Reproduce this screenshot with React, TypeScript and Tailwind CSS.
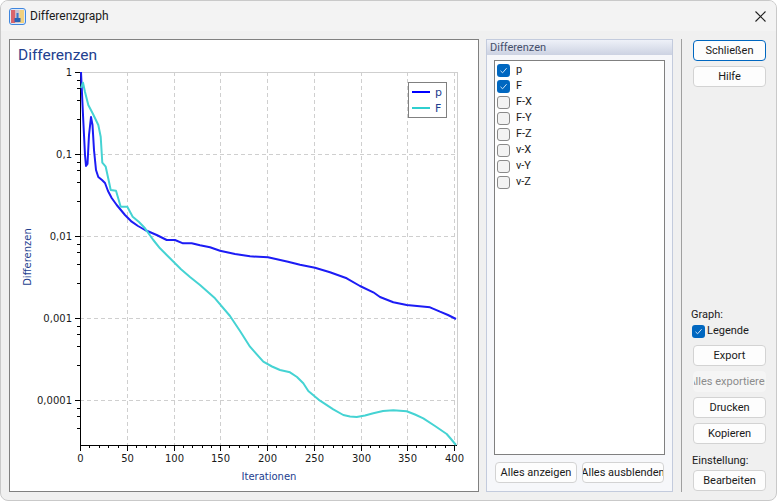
import { useState } from "react"

// curve points in page pixels, read off the plot
const pLine = "81,72 83,115 85,155 86,166 87.5,164 89,135 91,117 92.5,125 94,150 96,170 98.3,177 102,180 105,183 108,191 111.7,198 116.7,205 125,215 131.7,221.7 138,226 145,230 156.7,235 166.7,240 175,240 183,243.3 191.7,243.3 200,245.3 210,247.3 220,250.7 235,254 250,256.3 268,257.3 288,261.7 300,264.7 315,267.7 330,272.3 346.7,278.3 360,286 373.3,292.3 380,297 393.3,302.3 406.7,305 430,307.3 440,311.7 448,315 456,319"
const fLine = "81,88 83,82.7 85,92 88.3,105 93,114 98.3,125 100.7,136.7 102.3,162.7 105.7,166.7 109.3,183.3 110.7,190 116,190.7 120.7,206.7 127.3,206.7 132.7,216.7 139,222 145,228.3 153.3,240 160,248.3 166.7,255 181,269.3 190,277 200,285 215,298.3 230,316 240,331 250,346.7 263.3,361.7 272,366.5 280,370 290,372.3 297,377 303.3,383.3 308.3,391 320,400.7 333.3,409.3 343.3,415 350,416.5 356.7,417 365,415.5 373.3,413.3 383,411 393.3,410.3 406.7,411.3 415,414.5 423.3,418.3 435,426 446.7,434 451,439 456,445"

const xMajor = [
  { v: 0, x: 80 },
  { v: 50, x: 127 },
  { v: 100, x: 174 },
  { v: 150, x: 220 },
  { v: 200, x: 267 },
  { v: 250, x: 314 },
  { v: 300, x: 361 },
  { v: 350, x: 407 },
  { v: 400, x: 454 },
]
const yMajor = [
  { v: "1", y: 72 },
  { v: "0,1", y: 154 },
  { v: "0,01", y: 236 },
  { v: "0,001", y: 318 },
  { v: "0,0001", y: 400 },
]
const minorOffsets = [8, 16, 28, 47]

const series = [
  { name: "p", checked: true },
  { name: "F", checked: true },
  { name: "F-X", checked: false },
  { name: "F-Y", checked: false },
  { name: "F-Z", checked: false },
  { name: "v-X", checked: false },
  { name: "v-Y", checked: false },
  { name: "v-Z", checked: false },
]

function Check({ initial }: { initial: boolean }) {
  const [on, setOn] = useState(initial)
  return (
    <button
      onClick={() => setOn(!on)}
      className={
        on
          ? "w-[13px] h-[13px] rounded-[3px] bg-[#0067c0] flex items-center justify-center shrink-0"
          : "w-[13px] h-[13px] rounded-[3px] bg-[#f3f3f3] border border-[#8a8a8a] shrink-0"
      }
    >
      {on && (
        <svg width="9" height="9" viewBox="0 0 9 9" fill="none" stroke="#cfe3f5" strokeWidth="1">
          <path d="M1.5 4.8 L3.6 6.8 L7.6 2.2" />
        </svg>
      )}
    </button>
  )
}

function Btn({ label, disabled, primary, className }: { label: string; disabled?: boolean; primary?: boolean; className?: string }) {
  let look = "border-[#d3d3d3] bg-[#fdfdfd] text-[#1a1a1a]"
  if (disabled) look = "border-[#f5f5f5] bg-[#f5f5f5] text-[#8c8c8c]"
  if (primary) look = "border-[#0067c0] bg-[#fdfdfd] text-[#1a1a1a]"
  return (
    <button className={`h-[21px] w-[73px] shrink-0 pt-px flex items-center justify-center overflow-hidden whitespace-nowrap rounded-[4px] border ${look} ${className ?? ""}`}>
      {label}
    </button>
  )
}

function Plot() {
  const tick = "#000000"
  return (
    <svg viewBox="10 65 468 425" className="block w-[468px] h-[425px]">
      {/* grid */}
      {xMajor.slice(1).map((t) => (
        <line key={t.v} x1={t.x + 0.5} x2={t.x + 0.5} y1={72} y2={445} stroke="#cfcfcf" strokeDasharray="4 3" />
      ))}
      {yMajor.slice(1).map((t) => (
        <line key={t.v} x1={80} x2={457} y1={t.y + 0.5} y2={t.y + 0.5} stroke="#cfcfcf" strokeDasharray="4 3" />
      ))}
      <line x1={80} x2={457.5} y1={72.5} y2={72.5} stroke="#cfcfcf" />
      <line x1={457.5} x2={457.5} y1={72} y2={445} stroke="#cfcfcf" />

      {/* axes */}
      <line x1={80.5} x2={80.5} y1={72} y2={446} stroke={tick} />
      <line x1={80} x2={457} y1={445.5} y2={445.5} stroke={tick} />
      {yMajor.map((t) => (
        <g key={t.v}>
          <line x1={75} x2={80} y1={t.y + 0.5} y2={t.y + 0.5} stroke={tick} />
          {minorOffsets.map((o) =>
            t.y + o < 445 ? <line key={o} x1={77} x2={80} y1={t.y + o + 0.5} y2={t.y + o + 0.5} stroke={tick} /> : null,
          )}
          <text x={72} y={t.y + 4} textAnchor="end" fontSize="10" fill="#1a1a1a" className="font-['DejaVu_Sans',sans-serif]">
            {t.v}
          </text>
        </g>
      ))}
      {xMajor.map((t, i) => (
        <g key={t.v}>
          <line x1={t.x + 0.5} x2={t.x + 0.5} y1={445} y2={451} stroke={tick} />
          {i < xMajor.length - 1 &&
            [1, 2, 3, 4].map((m) => {
              const mx = Math.round(t.x + (m * (xMajor[i + 1].x - t.x)) / 5) + 0.5
              return <line key={m} x1={mx} x2={mx} y1={445} y2={448} stroke={tick} />
            })}
          <text x={t.x + 0.5} y={462} textAnchor="middle" fontSize="10" fill="#1a1a1a" className="font-['DejaVu_Sans',sans-serif]">
            {t.v}
          </text>
        </g>
      ))}
      <text x={269} y={480} textAnchor="middle" fontSize="10" fill="#23408f" className="font-['DejaVu_Sans',sans-serif]">
        Iterationen
      </text>
      <text
        transform="translate(31 257) rotate(-90)"
        textAnchor="middle"
        fontSize="10"
        fill="#23408f"
        className="font-['DejaVu_Sans',sans-serif]"
      >
        Differenzen
      </text>

      {/* curves */}
      <polyline points={pLine} fill="none" stroke="#1c1cf5" strokeWidth="2" strokeLinejoin="round" />
      <polyline points={fLine} fill="none" stroke="#45d3d3" strokeWidth="2" strokeLinejoin="round" />

      {/* legend */}
      <rect x={408.5} y={82.5} width={38} height={35} fill="#ffffff" stroke="#808080" />
      <line x1={412} x2={430} y1={92} y2={92} stroke="#0000ff" strokeWidth="2" />
      <line x1={412} x2={430} y1={108} y2={108} stroke="#2fcfcf" strokeWidth="2" />
      <text x={435} y={96} fontSize="11" fill="#23408f" className="font-['DejaVu_Sans',sans-serif]">
        p
      </text>
      <text x={435} y={112} fontSize="11" fill="#23408f" className="font-['DejaVu_Sans',sans-serif]">
        F
      </text>
    </svg>
  )
}

export default function App() {
  return (
    <div className="w-[777px] h-[501px] bg-white font-['Roboto',sans-serif] text-[11px] text-[#1a1a1a]">
      <div className="w-full h-full flex flex-col overflow-hidden rounded-[8px] border border-[#c9c9c9] bg-[#f0f0f0]">
        {/* title bar */}
        <div className="h-[30px] shrink-0 bg-[#f3f3f3] flex items-center pl-[8px] pr-[10px]">
          <svg width="17" height="17" viewBox="0 0 17 17" className="shrink-0">
            <rect x="0.5" y="0.5" width="16" height="16" rx="2.5" fill="#dfe9f7" stroke="#3f86de" />
            <rect x="2" y="2" width="4.5" height="13" fill="#d9646b" />
            <rect x="6.5" y="2" width="4" height="13" fill="#c9c0d0" />
            <rect x="10.5" y="2" width="4.5" height="13" fill="#f1d07c" />
            <rect x="7.5" y="5" width="2" height="5" fill="#3a78c8" />
            <rect x="5.5" y="10" width="6" height="4" fill="#2a63b4" />
          </svg>
          <span className="ml-[4px] text-[12px]">Differenzgraph</span>
          <svg width="11" height="11" viewBox="0 0 11 11" className="ml-auto" stroke="#222" strokeWidth="1.1">
            <path d="M0.5 0.5 L10.5 10.5 M10.5 0.5 L0.5 10.5" />
          </svg>
        </div>

        {/* body */}
        <div className="flex-1 flex pl-[8px] pt-[8px]">
          {/* chart */}
          <div className="w-[470px] h-[453px] border border-[#808080] bg-white shrink-0">
            <div className="h-[25px] pl-[8px] pt-[4px] text-[15.5px] leading-[22px] text-[#23408f]">Differenzen</div>
            <Plot />
          </div>

          {/* series list */}
          <div className="ml-[7px] w-[187px] h-[453px] shrink-0 border border-[#c3cbdd] bg-[#f6f7fa] flex flex-col">
            <div className="h-[15px] shrink-0 pl-[3px] leading-[15px] text-[#454f6b] bg-linear-to-b from-[#eef1f8] to-[#ccd2e2]">Differenzen</div>
            <div className="mt-[5px] mx-[7px] h-[395px] border border-[#808080] bg-white pt-[1px] pl-[2px] flex flex-col">
              {series.map((s) => (
                <div key={s.name} className="h-[16px] flex items-center gap-[6px]">
                  <Check initial={s.checked} />
                  <span className="mt-[1px]">{s.name}</span>
                </div>
              ))}
            </div>
            <div className="mt-[7px] mx-[8px] flex gap-[5px]">
              <Btn label="Alles anzeigen" className="w-[82px]!" />
              <Btn label="Alles ausblenden" className="w-[82px]!" />
            </div>
          </div>

          <div className="ml-[8px] w-px h-[453px] bg-[#a0a0a0] shrink-0" />

          {/* buttons */}
          <div className="ml-[11px] w-[73px] h-[452px] shrink-0 flex flex-col justify-between">
            <div className="flex flex-col gap-[5px] pt-[1px]">
              <Btn label="Schließen" primary />
              <Btn label="Hilfe" />
            </div>
            <div className="flex flex-col">
              <span className="-ml-[2px] mb-[1px] h-[16px] leading-[17px]">Graph:</span>
              <div className="-ml-[1px] h-[16px] flex items-center gap-[2px]">
                <Check initial={true} />
                <span className="mt-[1px]">Legende</span>
              </div>
              <div className="mt-[6px] flex flex-col gap-[5px]">
                <Btn label="Export" />
                <Btn label="Alles exportieren" disabled />
                <Btn label="Drucken" />
                <Btn label="Kopieren" />
              </div>
              <span className="mt-[8px] -ml-[1px] h-[16px] leading-[17px]">Einstellung:</span>
              <Btn label="Bearbeiten" className="mt-[2px]" />
            </div>
          </div>
        </div>
      </div>
    </div>
  )
}
